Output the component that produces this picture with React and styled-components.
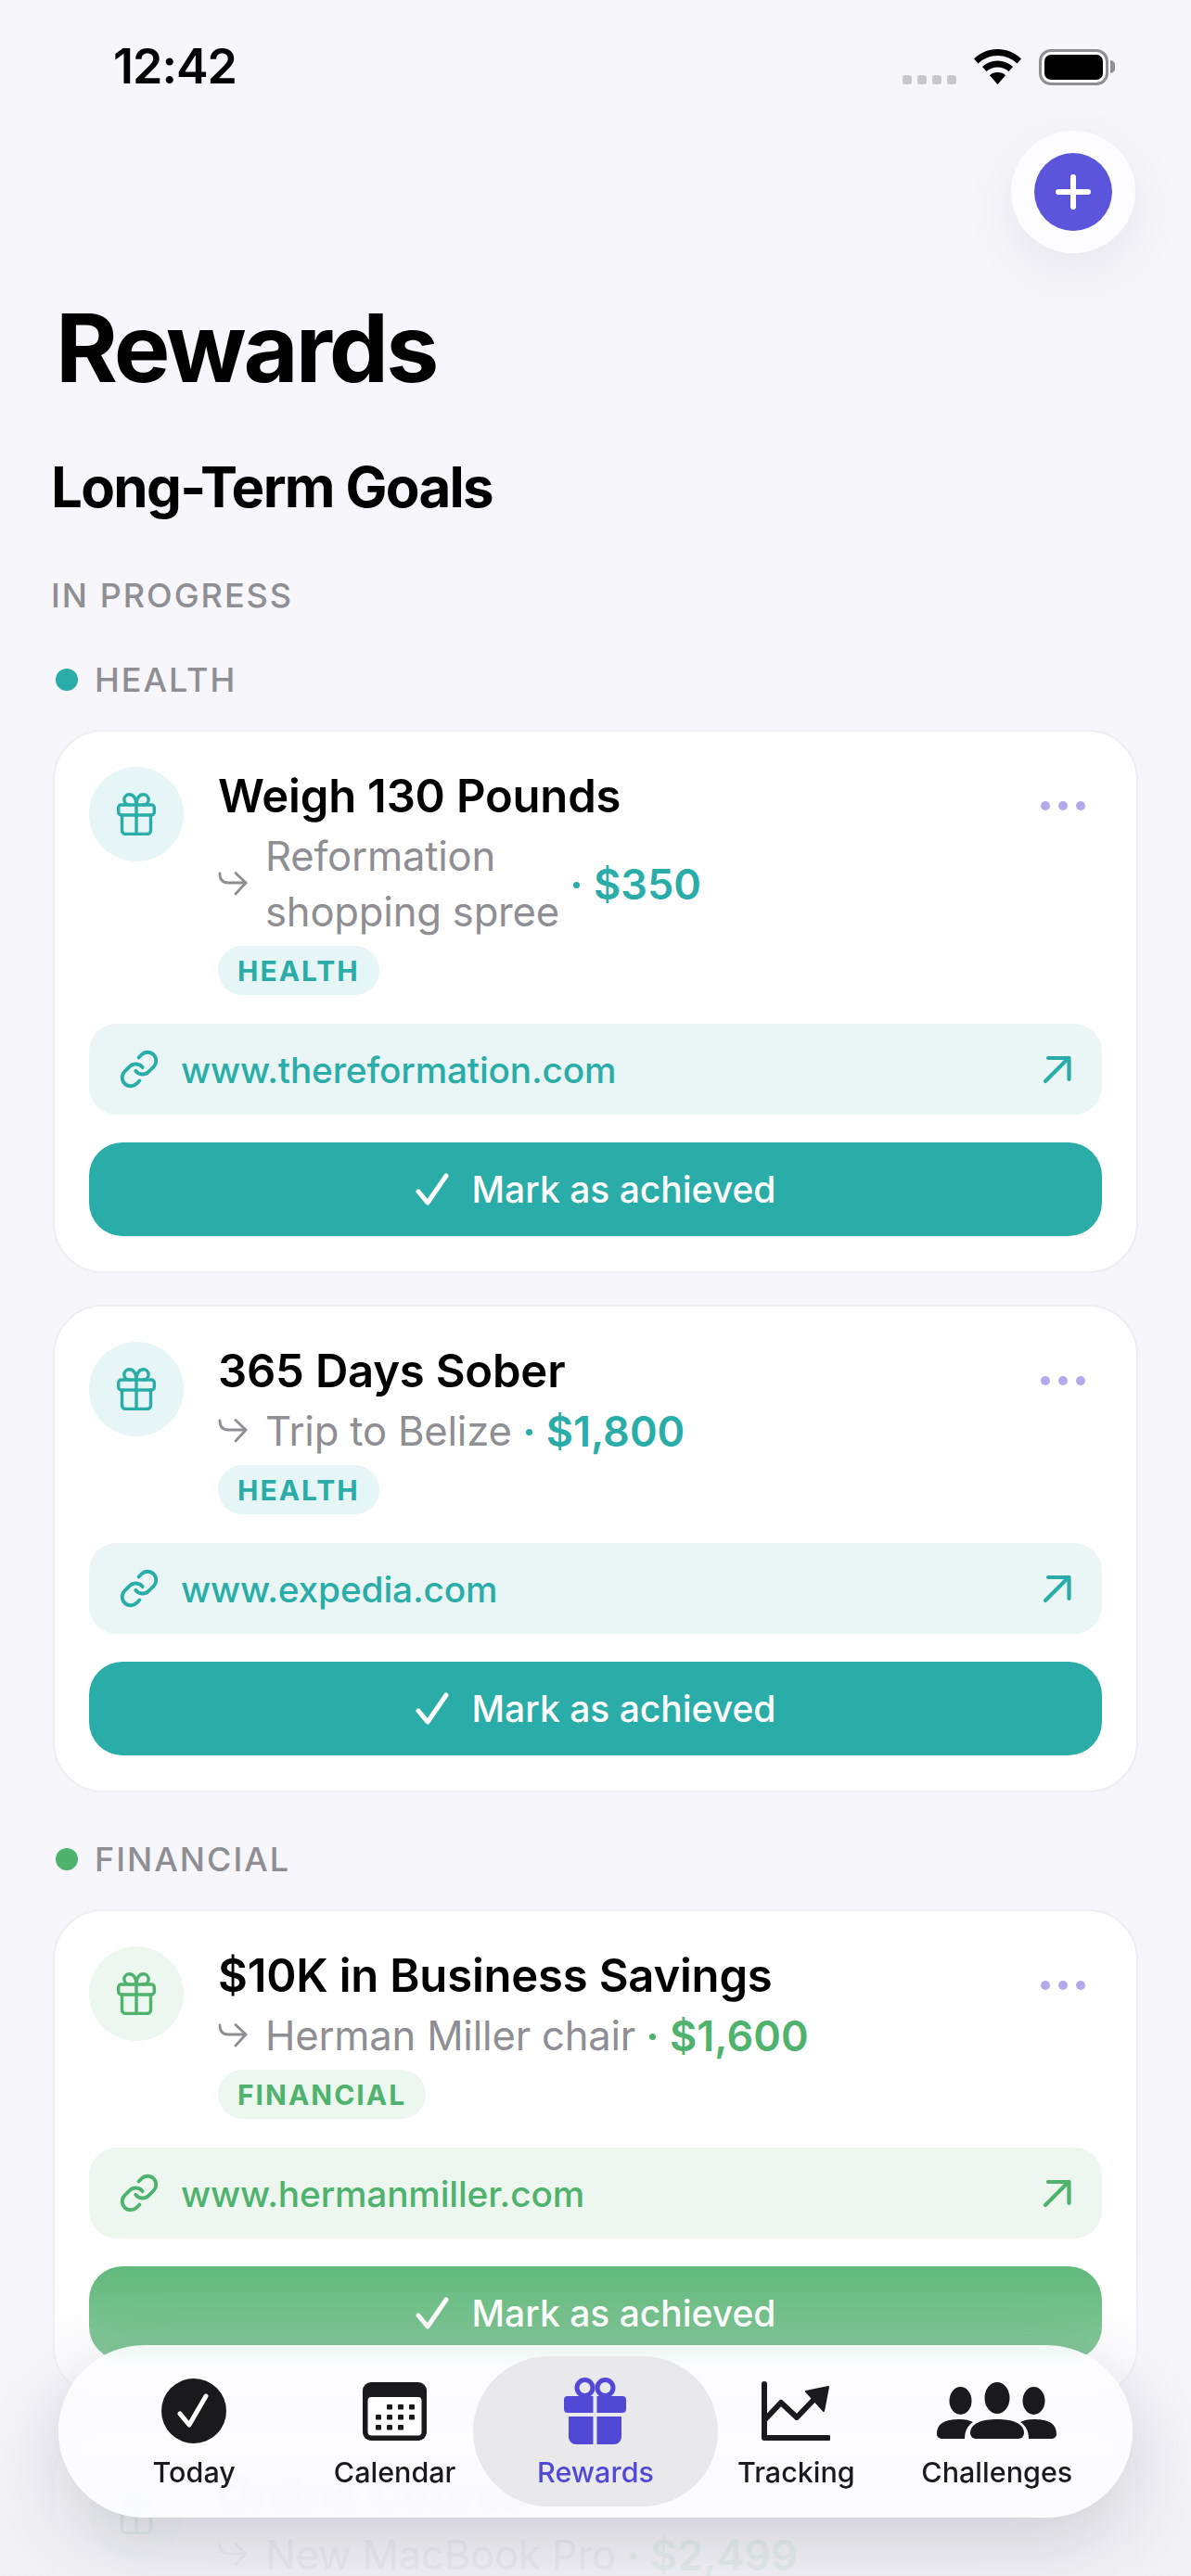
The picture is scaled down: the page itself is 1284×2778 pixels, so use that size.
import styled, { createGlobalStyle } from 'styled-components'
import { Fragment } from 'react'

const TEAL = { main: '#2AADA8', soft: '#EAF6F6', chip: '#E6F5F5' }
const GREEN = { main: '#4FB26D', soft: '#EDF7F0', chip: '#ECF7EF', button: '#57B573' }
const DARK = '#1A1A1C'
const PURPLE = '#5148D6'

const sections = [
  {
    label: 'HEALTH',
    tone: TEAL,
    goals: [
      { title: 'Weigh 130 Pounds', reward: ['Reformation', 'shopping spree'], price: '$350', url: 'www.thereformation.com' },
      { title: '365 Days Sober', reward: ['Trip to Belize'], price: '$1,800', url: 'www.expedia.com' },
    ],
  },
  {
    label: 'FINANCIAL',
    tone: GREEN,
    goals: [
      { title: '$10K in Business Savings', reward: ['Herman Miller chair'], price: '$1,600', url: 'www.hermanmiller.com' },
      { title: 'Online Course', reward: ['New MacBook Pro'], price: '$2,499', url: 'www.apple.com' },
    ],
  },
]

const tabs = [
  { name: 'Today', Icon: TodayIcon },
  { name: 'Calendar', Icon: CalendarIcon },
  { name: 'Rewards', Icon: GiftSolidIcon, active: true },
  { name: 'Tracking', Icon: TrackingIcon },
  { name: 'Challenges', Icon: PeopleIcon },
]

function GiftIcon({ color }) {
  return (
    <svg width="42" height="46" viewBox="0 0 42 46" fill="none" stroke={color} strokeWidth="3.4" strokeLinejoin="round" strokeLinecap="round">
      <rect x="1.700" y="13" width="38.600" height="11" rx="3" />
      <path d="M5.500 24v16.500a4 4 0 0 0 4 4h23a4 4 0 0 0 4-4V24" />
      <path d="M21 13v31" />
      <path d="M21 13c0-6-2.500-11.300-7.500-11.300a5.650 5.650 0 0 0 0 11.300M21 13c0-6 2.500-11.300 7.500-11.300a5.650 5.650 0 0 1 0 11.300" />
    </svg>
  )
}

function HookArrow() {
  return (
    <svg width="32" height="28" viewBox="0 0 32 28" fill="none" stroke="#8E8E93" strokeWidth="2.8" strokeLinecap="round" strokeLinejoin="round">
      <path d="M2 2c0 7 3 10 9 10h19" />
      <path d="M19 1.500L30 12 19 24" />
    </svg>
  )
}

function LinkIcon({ color }) {
  return (
    <svg width="44" height="44" viewBox="0 0 24 24" fill="none" stroke={color} strokeWidth="2.1" strokeLinecap="round" strokeLinejoin="round">
      <path d="M10 13a5 5 0 0 0 7.540.540l3-3a5 5 0 0 0-7.070-7.070l-1.720 1.710" />
      <path d="M14 11a5 5 0 0 0-7.540-.540l-3 3a5 5 0 0 0 7.070 7.070l1.710-1.710" />
    </svg>
  )
}

function OutArrow({ color }) {
  return (
    <svg width="31" height="31" viewBox="0 0 31 31" fill="none" stroke={color} strokeWidth="4.2" strokeLinecap="round" strokeLinejoin="round">
      <path d="M3 28L28 3" />
      <path d="M6 3h22.500v23" />
    </svg>
  )
}

function CheckIcon() {
  return (
    <svg width="36" height="35" viewBox="0 0 36 35" fill="none" stroke="#fff" strokeWidth="5" strokeLinecap="round" strokeLinejoin="round">
      <path d="M3 20l10 12L33 3" />
    </svg>
  )
}

function TodayIcon() {
  return (
    <svg width="70" height="70" viewBox="0 0 70 70">
      <circle cx="35" cy="35" r="35" fill={DARK} />
      <path d="M20 38l10 12 18-31" fill="none" stroke="#fff" strokeWidth="5" strokeLinecap="round" strokeLinejoin="round" />
    </svg>
  )
}

function CalendarIcon() {
  const dots = [
    [26, 24], [38, 24], [50, 24],
    [14, 35], [26, 35], [38, 35], [50, 35],
    [14, 46], [26, 46], [38, 46],
  ]
  return (
    <svg width="69" height="63" viewBox="0 0 69 63">
      <rect width="69" height="63" rx="9" fill={DARK} />
      <rect x="5.500" y="16" width="58" height="41.500" rx="4" fill="#fff" />
      {dots.map(([x, y]) => (
        <rect key={`${x}-${y}`} x={x} y={y} width="6" height="5.500" rx="1" fill={DARK} />
      ))}
    </svg>
  )
}

function GiftSolidIcon() {
  return (
    <svg width="67" height="72" viewBox="0 0 67 72">
      <circle cx="22.500" cy="11" r="8.500" fill="none" stroke={PURPLE} strokeWidth="5" />
      <circle cx="44.500" cy="11" r="8.500" fill="none" stroke={PURPLE} strokeWidth="5" />
      <path d="M4 20h27.500v18H4a4 4 0 0 1-4-4V24a4 4 0 0 1 4-4zM35.500 20H63a4 4 0 0 1 4 4v10a4 4 0 0 1-4 4H35.500z" fill={PURPLE} />
      <path d="M5 42h26.500v30H13a8 8 0 0 1-8-8zM35.500 42H62v22a8 8 0 0 1-8 8H35.500z" fill={PURPLE} />
    </svg>
  )
}

function TrackingIcon() {
  return (
    <svg width="74" height="64" viewBox="0 0 74 64" fill="none">
      <path d="M3 3v58h69" stroke={DARK} strokeWidth="6" strokeLinecap="round" strokeLinejoin="round" />
      <path d="M4 41l17-18 17 16 21-22" stroke={DARK} strokeWidth="6" strokeLinejoin="round" />
      <path d="M48 11l24-5-5 26z" fill={DARK} stroke={DARK} strokeWidth="2" strokeLinejoin="round" />
    </svg>
  )
}

function PeopleIcon() {
  return (
    <svg width="129" height="62" viewBox="0 0 129 62">
      <ellipse cx="25.500" cy="20" rx="12" ry="15" fill={DARK} />
      <ellipse cx="65" cy="17" rx="13.500" ry="17" fill={DARK} />
      <ellipse cx="104.500" cy="20" rx="12" ry="15" fill={DARK} />
      <path d="M0 56c0-13 11-16 25-16 6 0 10 1 14 3-6 4-9 10-9 18H5a5 5 0 0 1-5-5z" fill={DARK} />
      <path d="M129 56c0-13-11-16-25-16-6 0-10 1-14 3 6 4 9 10 9 18h25a5 5 0 0 0 5-5z" fill={DARK} />
      <path d="M36 55c0-11 13-15 29-15s29 4 29 15a6 6 0 0 1-6 6H42a6 6 0 0 1-6-6z" fill={DARK} />
    </svg>
  )
}

function WifiIcon() {
  return (
    <svg width="51" height="38" viewBox="0 0 51 38">
      <path d="M25.500 0C15.500 0 7 3.800 0 10.500l4.500 5C10.500 10 17.500 7 25.500 7s15 3 21 8.500l4.500-5C44 3.800 35.500 0 25.500 0z" />
      <path d="M25.500 12.500c-6.500 0-12 2.300-16.500 6.500l4.500 5c3.300-3 7.300-4.500 12-4.500s8.700 1.500 12 4.500l4.500-5c-4.500-4.200-10-6.500-16.500-6.500z" />
      <path d="M25.500 25c-3.500 0-6.500 1.200-8.500 3.200L25.500 38 34 28.200c-2-2-5-3.200-8.500-3.200z" />
    </svg>
  )
}

export default function App() {
  return (
    <>
      <GlobalStyle />
      <Page>
        <StatusBar>
          <Clock>12:42</Clock>
          <StatusIcons>
            <SignalDots>
              <i /><i /><i /><i />
            </SignalDots>
            <WifiIcon />
            <Battery />
          </StatusIcons>
        </StatusBar>

        <AddRow>
          <AddHalo>
            <AddButton>
              <svg width="38" height="38" viewBox="0 0 38 38" stroke="#fff" strokeWidth="6" strokeLinecap="round">
                <path d="M19 3v32M3 19h32" />
              </svg>
            </AddButton>
          </AddHalo>
        </AddRow>

        <Title>Rewards</Title>
        <SectionTitle>Long-Term Goals</SectionTitle>
        <Overline>IN PROGRESS</Overline>

        {sections.map((section) => (
          <Fragment key={section.label}>
            <GroupLabel>
              <Dot $color={section.tone.main} />
              {section.label}
            </GroupLabel>
            <CardList>
              {section.goals.map((goal) => (
                <Card key={goal.title}>
                  <CardHead>
                    <IconCircle $bg={section.tone.chip}>
                      <GiftIcon color={section.tone.main} />
                    </IconCircle>
                    <CardBody>
                      <CardTitle>{goal.title}</CardTitle>
                      <RewardRow>
                        <HookArrow />
                        <RewardName>
                          {goal.reward.map((line, i) => (
                            <Fragment key={line}>
                              {i > 0 && <br />}
                              {line}
                            </Fragment>
                          ))}
                        </RewardName>
                        <PriceDot $color={section.tone.main} />
                        <Price $color={section.tone.main}>{goal.price}</Price>
                      </RewardRow>
                      <Chip $bg={section.tone.chip} $color={section.tone.main}>{section.label}</Chip>
                    </CardBody>
                    <MoreDots>
                      <i /><i /><i />
                    </MoreDots>
                  </CardHead>
                  <LinkRow $bg={section.tone.soft} $color={section.tone.main}>
                    <LinkIcon color={section.tone.main} />
                    <LinkText>{goal.url}</LinkText>
                    <OutArrow color={section.tone.main} />
                  </LinkRow>
                  <AchieveButton $bg={section.tone.button || section.tone.main}>
                    <CheckIcon />
                    Mark as achieved
                  </AchieveButton>
                </Card>
              ))}
            </CardList>
          </Fragment>
        ))}

        <BottomFade />
        <TabBar>
          {tabs.map(({ name, Icon, active }) => (
            <Tab key={name} $active={active}>
              <TabIcon><Icon /></TabIcon>
              <TabLabel $active={active}>{name}</TabLabel>
            </Tab>
          ))}
        </TabBar>
      </Page>
    </>
  )
}

const GlobalStyle = createGlobalStyle`
  html, body {
    margin: 0;
    padding: 0;
    background: #F6F6FB;
  }
  * {
    box-sizing: border-box;
  }
  body {
    font-family: Inter, "Liberation Sans", sans-serif;
  }
`

const Page = styled.div`
  position: relative;
  width: 1284px;
  height: 2778px;
  overflow: hidden;
  background: #F6F6FB;
`

const StatusBar = styled.div`
  height: 141px;
  padding: 43px 89px 0 122px;
  display: flex;
  justify-content: space-between;
  align-items: flex-start;
`

const Clock = styled.div`
  font-size: 52px;
  line-height: 58px;
  font-weight: 600;
  letter-spacing: -1px;
  color: #000;
`

const StatusIcons = styled.div`
  display: flex;
  align-items: flex-start;
  margin-top: 10px;
  gap: 19px;
`

const SignalDots = styled.div`
  display: flex;
  gap: 6px;
  margin-top: 28px;
  i {
    width: 10px;
    height: 10px;
    border-radius: 3px;
    background: #C7C7CC;
  }
`

const Battery = styled.div`
  position: relative;
  width: 75px;
  height: 39px;
  border: 3px solid #8E8E93;
  border-radius: 13px;
  background: #fff;
  &::before {
    content: '';
    display: block;
    margin: 3px;
    height: 27px;
    border-radius: 7px;
    background: #000;
  }
  &::after {
    content: '';
    position: absolute;
    right: -10px;
    top: 9px;
    width: 5px;
    height: 14px;
    border-radius: 0 5px 5px 0;
    background: #8E8E93;
  }
`

const AddRow = styled.div`
  display: flex;
  justify-content: flex-end;
  padding-right: 60px;
`

const AddHalo = styled.div`
  width: 134px;
  height: 132px;
  border-radius: 50%;
  background: #FDFDFF;
  box-shadow: 0 18px 60px rgba(20, 20, 40, 0.07);
  display: flex;
  align-items: center;
  justify-content: center;
`

const AddButton = styled.div`
  width: 84px;
  height: 84px;
  border-radius: 50%;
  background: #5B55DC;
  display: flex;
  align-items: center;
  justify-content: center;
`

const Title = styled.h1`
  margin: 47px 0 0 60px;
  font-size: 102px;
  line-height: 110px;
  font-weight: 700;
  letter-spacing: -3px;
  color: #000;
`

const SectionTitle = styled.h2`
  margin: 60px 0 0 55px;
  font-size: 60px;
  line-height: 70px;
  font-weight: 650;
  letter-spacing: -1.700px;
  color: #000;
`

const Overline = styled.div`
  margin: 60px 0 0 55px;
  font-size: 36px;
  line-height: 44px;
  font-weight: 500;
  letter-spacing: 2px;
  color: #8E8E93;
`

const GroupLabel = styled.div`
  display: flex;
  align-items: center;
  gap: 18px;
  margin: 47px 0 32px 60px;
  font-size: 36px;
  line-height: 44px;
  font-weight: 500;
  letter-spacing: 2px;
  color: #8E8E93;
`

const Dot = styled.span`
  width: 24px;
  height: 24px;
  border-radius: 50%;
  background: ${({ $color }) => $color};
`

const CardList = styled.div`
  display: flex;
  flex-direction: column;
  gap: 34px;
  padding: 0 57px;
  margin-bottom: 50px;
  & + ${GroupLabel} {
    margin-top: 0;
  }
`

const Card = styled.article`
  display: flex;
  flex-direction: column;
  gap: 30px;
  padding: 38px 37px;
  border: 2px solid #EEEEF2;
  border-radius: 54px;
  background: #fff;
`

const CardHead = styled.div`
  display: flex;
  align-items: flex-start;
  gap: 37px;
`

const IconCircle = styled.div`
  flex: none;
  width: 102px;
  height: 102px;
  border-radius: 50%;
  background: ${({ $bg }) => $bg};
  display: flex;
  align-items: center;
  justify-content: center;
`

const CardBody = styled.div`
  flex: 1;
  display: flex;
  flex-direction: column;
  align-items: flex-start;
`

const CardTitle = styled.div`
  font-size: 49px;
  line-height: 63px;
  font-weight: 600;
  letter-spacing: -0.200px;
  color: #000;
`

const RewardRow = styled.div`
  display: flex;
  align-items: center;
  margin: 4px 0 6px;
`

const RewardName = styled.div`
  margin-left: 19px;
  font-size: 43.600px;
  line-height: 60px;
  font-weight: 400;
  letter-spacing: -0.200px;
  color: #8E8E93;
`

const PriceDot = styled.span`
  width: 7px;
  height: 7px;
  margin: 0 15px 0 15px;
  border-radius: 50%;
  background: ${({ $color }) => $color};
`

const Price = styled.span`
  font-size: 45px;
  line-height: 60px;
  font-weight: 600;
  color: ${({ $color }) => $color};
`

const Chip = styled.span`
  height: 53px;
  margin-bottom: 1px;
  padding: 0 21px;
  border-radius: 27px;
  display: flex;
  align-items: center;
  font-size: 30px;
  font-weight: 700;
  letter-spacing: 2px;
  color: ${({ $color }) => $color};
  background: ${({ $bg }) => $bg};
`

const MoreDots = styled.div`
  flex: none;
  display: flex;
  gap: 9px;
  margin: 37px 18px 0 0;
  i {
    width: 10px;
    height: 10px;
    border-radius: 50%;
    background: #B3A9EC;
  }
`

const LinkRow = styled.div`
  height: 98px;
  padding: 0 33px 0 32px;
  border-radius: 30px;
  display: flex;
  align-items: center;
  gap: 23px;
  color: ${({ $color }) => $color};
  background: ${({ $bg }) => $bg};
`

const LinkText = styled.span`
  flex: 1;
  font-size: 38.800px;
  font-weight: 500;
  letter-spacing: -0.150px;
`

const AchieveButton = styled.div`
  height: 101px;
  border-radius: 36px;
  display: flex;
  align-items: center;
  justify-content: center;
  gap: 25px;
  font-size: 39px;
  font-weight: 500;
  color: #fff;
  background: ${({ $bg }) => $bg};
`

const BottomFade = styled.div`
  position: absolute;
  left: 0;
  right: 0;
  bottom: 0;
  height: 360px;
  background: linear-gradient(180deg, rgba(246, 246, 251, 0) 0%, rgba(246, 246, 251, 0.3) 35%, rgba(240, 240, 245, 0.92) 88%);
`

const TabBar = styled.nav`
  position: absolute;
  left: 63px;
  top: 2529px;
  width: 1158px;
  height: 186px;
  padding: 12px 38px;
  border-radius: 93px;
  display: grid;
  grid-template-columns: repeat(5, 1fr);
  background: rgba(253, 253, 255, 0.9);
  backdrop-filter: blur(5px);
  box-shadow: 0 24px 80px rgba(20, 20, 40, 0.16);
`

const Tab = styled.div`
  position: relative;
  display: flex;
  flex-direction: column;
  align-items: center;
  &::before {
    content: '';
    display: ${({ $active }) => ($active ? 'block' : 'none')};
    position: absolute;
    inset: 0 -24px;
    border-radius: 81px;
    background: #E9E9EB;
  }
`

const TabIcon = styled.div`
  position: relative;
  height: 82px;
  margin-top: 18px;
  display: flex;
  align-items: center;
  justify-content: center;
`

const TabLabel = styled.span`
  position: relative;
  margin-top: 5px;
  font-size: 30.500px;
  line-height: 40px;
  font-weight: 500;
  color: ${({ $active }) => ($active ? PURPLE : DARK)};
`
